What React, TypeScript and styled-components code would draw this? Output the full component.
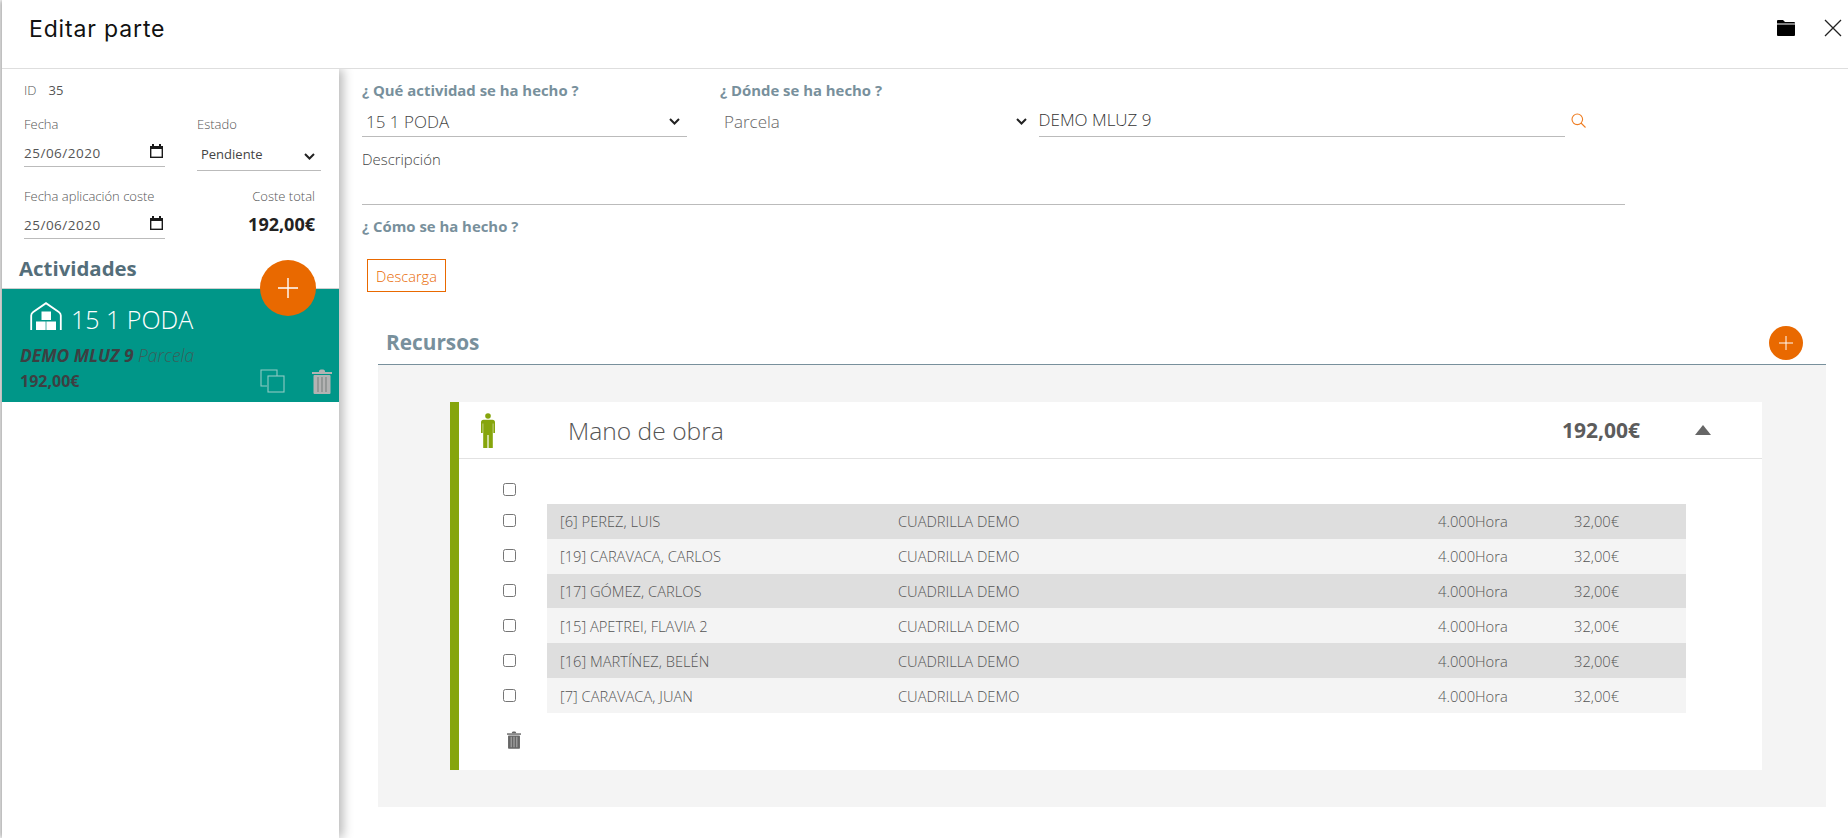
import React from "react";
import styled, { createGlobalStyle } from "styled-components";

const chevron =
  "url(\"data:image/svg+xml,%3Csvg xmlns='http://www.w3.org/2000/svg' width='11' height='7' viewBox='0 0 11 7'%3E%3Cpath d='M1 1l4.5 4.5L10 1' fill='none' stroke='%23222' stroke-width='2'/%3E%3C/svg%3E\")";

const Global = createGlobalStyle`
  html, body { margin: 0; padding: 0; background: #fff; height: 100%; overflow: hidden; }
  body { font-family: "Open Sans", "Liberation Sans", sans-serif; }
  #root { height: 100%; }
`;

const Shell = styled.div`
  margin-left: 2px;
  height: 838px;
  background: #fff;
  box-shadow: -2px 0 5px rgba(0, 0, 0, 0.35);
  display: flex;
  flex-direction: column;
`;
const Header = styled.header`
  height: 68px;
  flex: none;
  border-bottom: 1px solid #dedede;
  display: flex;
  align-items: center;
  padding: 0 6px 0 27px;
`;
const Title = styled.h1`
  flex: 1;
  margin: 0 0 10px;
  font-family: Inter, "Open Sans", sans-serif;
  font-size: 23px;
  font-weight: 400;
  letter-spacing: 0.85px;
  color: #111;
`;
const HeaderIcons = styled.div`
  display: flex;
  align-items: center;
  gap: 29px;
  margin-bottom: 12px;
  svg { display: block; }
`;
const Body = styled.div`
  flex: 1;
  display: flex;
  min-height: 0;
`;
const Side = styled.aside`
  position: relative;
  width: 337px;
  flex: none;
  box-shadow: 4px 0 10px rgba(0, 0, 0, 0.28);
  clip-path: inset(0 -20px 0 0);
  display: flex;
  flex-direction: column;
`;
const SideForm = styled.div`
  padding: 11px 22px 0 22px;
  color: #555;
  font-size: 13px;
  font-weight: 300;
`;
const IdRow = styled.div`
  display: flex;
  gap: 12px;
  height: 20px;
  align-items: center;
`;
const IdValue = styled.span`
  font-weight: 400;
`;
const SideGrid = styled.div`
  display: grid;
  grid-template-columns: 141px 124px;
  column-gap: 32px;
  margin-top: 14px;
`;
const SideField = styled.div<{ $right?: boolean }>`
  height: 72px;
  ${(p) => (p.$right ? "text-align: right; padding-right: 6px;" : "")}
`;
const FieldLabel = styled.div`
  height: 20px;
  line-height: 20px;
  color: #555;
  font-size: 13px;
  font-weight: 300;
  white-space: nowrap;
`;
const DateBox = styled.div`
  display: flex;
  align-items: center;
  justify-content: space-between;
  height: 31px;
  margin-top: 2px;
  padding: 0 2px 0 0;
  box-sizing: border-box;
  border-bottom: 1px solid #bbb;
  font-size: 13.5px;
  letter-spacing: 0.5px;
  color: #555;
  font-weight: 400;
`;
const DateText = styled.span`
  padding-top: 3px;
`;
const NativeSelect = styled.select<{ $size: number; $light?: boolean; $w?: string; $arrow: number }>`
  display: block;
  appearance: none;
  width: ${(p) => p.$w ?? "100%"};
  font-family: "Open Sans", sans-serif;
  font-size: ${(p) => p.$size}px;
  font-weight: ${(p) => (p.$light ? 300 : 400)};
  color: #444;
  background: #fff ${chevron} no-repeat right ${(p) => p.$arrow}px top 17px;
  border: 0;
  border-bottom: 1px solid #bbb;
  border-radius: 0;
  outline: none;
  padding-left: 4px;
`;
const EstadoSelect = styled(NativeSelect)`
  height: 35px;
  margin-top: 2px;
  padding-top: 2px;
`;
const TotalValue = styled.div`
  font-size: 18px;
  font-weight: 700;
  color: #222;
  line-height: 28px;
  margin-top: 4px;
`;
const ActHeading = styled.h2`
  margin: -4px 0 0 17px;
  height: 28px;
  line-height: 28px;
  font-size: 20.4px;
  font-weight: 700;
  color: #546e7a;
`;
const ActCard = styled.div`
  margin-top: 6px;
  height: 114px;
  box-sizing: border-box;
  background: #009688;
  border-top: 1px solid #cfcfcf;
  padding: 14px 0 0 15px;
  position: relative;
`;
const CardTitle = styled.div`
  display: flex;
  align-items: center;
  gap: 9px;
  margin: 0 0 1px 13px;
  font-size: 25px;
  font-weight: 300;
  color: #fff;
  line-height: 32px;
  svg { align-self: flex-start; margin-top: -1px; }
`;
const Place = styled.div`
  margin-top: 9px;
  margin-left: 3px;
  font-style: italic;
  font-size: 17.4px;
  line-height: 22px;
  color: #3a5f5a;
  font-weight: 300;
  white-space: nowrap;
  b { font-weight: 700; color: #3d3f42; }
`;
const CardFoot = styled.div`
  display: flex;
  align-items: center;
  justify-content: space-between;
  padding-right: 7px;
`;
const CardAmount = styled.div`
  font-size: 16px;
  font-weight: 700;
  color: #3d3f42;
  line-height: 30px;
  margin-left: 3px;
`;
const CardActions = styled.div`
  display: flex;
  align-items: center;
  gap: 27px;
`;
const Fab = styled.button<{ $size: number }>`
  width: ${(p) => p.$size}px;
  height: ${(p) => p.$size}px;
  border-radius: 50%;
  border: 0;
  padding: 0;
  background: #e96900;
  display: flex;
  align-items: center;
  justify-content: center;
  flex: none;
`;
const SideFab = styled(Fab)`
  position: absolute;
  left: 258px;
  top: 191px;
`;
const Main = styled.main`
  flex: 1;
  min-width: 0;
  padding: 11px 22px 0 23px;
`;
const TopGrid = styled.div`
  display: grid;
  grid-template-columns: 325px 1fr;
  column-gap: 33px;
`;
const Question = styled.div`
  height: 21px;
  line-height: 21px;
  font-size: 14.9px;
  font-weight: 700;
  color: #78909c;
`;
const ActivitySelect = styled(NativeSelect)`
  height: 36px;
  padding-top: 5px;
`;
const WhereRow = styled.div`
  display: flex;
  align-items: flex-start;
`;
const ParcelaSelect = styled(NativeSelect)`
  height: 35px;
  border-bottom: 0;
  color: #666;
  margin-right: 9.5px;
  padding-top: 5px;
`;
const PlaceInput = styled.div`
  width: 526px;
  height: 36px;
  line-height: 38px;
  box-sizing: border-box;
  border-bottom: 1px solid #bbb;
  font-size: 17px;
  font-weight: 300;
  color: #333;
`;
const SearchBtn = styled.span`
  margin: 12px 0 0 6px;
  svg { display: block; }
`;
const DescBlock = styled.div`
  width: 1263px;
  height: 68px;
  box-sizing: border-box;
  padding-top: 12px;
  border-bottom: 1px solid #bbb;
  font-size: 14.9px;
  font-weight: 300;
  color: #444;
  line-height: 20px;
`;
const HowLabel = styled(Question)`
  margin-top: 11px;
`;
const OutlineBtn = styled.button`
  display: block;
  margin: 22px 0 0 5px;
  width: 79px;
  height: 33px;
  padding: 0;
  background: #fff;
  border: 1px solid #e96900;
  color: #e96900;
  font-family: "Open Sans", sans-serif;
  font-size: 14.6px;
  font-weight: 300;
`;
const ResourceHead = styled.div`
  margin: 34px 0 0 16px;
  height: 39px;
  box-sizing: border-box;
  border-bottom: 1px solid #78909c;
  display: flex;
  justify-content: space-between;
  padding: 0 23px 0 8px;
`;
const ResourceTitle = styled.h2`
  margin: 0;
  font-size: 20.8px;
  font-weight: 700;
  line-height: 32px;
  color: #78909c;
`;
const Panel = styled.section`
  margin-left: 16px;
  height: 442px;
  box-sizing: border-box;
  background: #f4f4f4;
  padding: 37px 64px 37px 72px;
`;
const ResourceCard = styled.article`
  height: 368px;
  background: #fff;
  border-left: 9px solid #86a50c;
  box-sizing: border-box;
  display: flex;
  flex-direction: column;
`;
const ResCardHead = styled.div`
  height: 57px;
  flex: none;
  box-sizing: border-box;
  border-bottom: 1px solid #e2e2e2;
  display: flex;
  align-items: center;
  padding-left: 22px;
`;
const ResName = styled.div`
  margin-left: 73px;
  flex: 1;
  font-size: 24.6px;
  font-weight: 300;
  color: #555;
`;
const ResAmount = styled.div`
  font-size: 21px;
  font-weight: 700;
  color: #5c5c5c;
  margin-right: 55px;
`;
const Triangle = styled.span`
  width: 0;
  height: 0;
  border-left: 8px solid transparent;
  border-right: 8px solid transparent;
  border-bottom: 10px solid #666;
  margin-right: 51px;
`;
const ResBody = styled.div`
  padding: 24px 0 0 44px;
`;
const AllCheck = styled.div`
  height: 21px;
`;
const Check = styled.input.attrs({ type: "checkbox" })`
  display: block;
  width: 13px;
  height: 13px;
  margin: 0;
`;
const ResRow = styled.div`
  display: flex;
  align-items: center;
  height: 34.83px;
`;
const RowCheck = styled.div`
  width: 44px;
  flex: none;
  margin-top: -1px;
`;
const RowData = styled.div<{ $dark: boolean }>`
  width: 1139px;
  height: 100%;
  display: grid;
  grid-template-columns: 338px 540px 136px 1fr;
  align-items: center;
  padding-left: 13px;
  box-sizing: border-box;
  background: ${(p) => (p.$dark ? "#dedede" : "#f4f4f4")};
  font-size: 14.7px;
  font-weight: 300;
  color: #555;
  white-space: nowrap;
`;
const RowTrash = styled.div`
  margin: 18px 0 0 4px;
  svg { display: block; }
`;

const Plus = ({ size }: { size: number }) => (
  <svg width={size} height={size} viewBox="0 0 20 20">
    <path d="M10 0v20M0 10h20" stroke="#fff" strokeWidth="1.4" fill="none" />
  </svg>
);

const Trash = ({ w, h, body, bars }: { w: number; h: number; body: string; bars: string }) => (
  <svg width={w} height={h} viewBox="0 0 20 25">
    <path d="M7 2.2C7 1 8 .5 10 .5s3 .5 3 1.7V3H7z" fill={body} />
    <rect x="0" y="3" width="20" height="2" fill={body} />
    <rect x="1.5" y="6" width="17" height="19" rx="1" fill={body} />
    <path d="M6 8v15M10 8v15M14 8v15" stroke={bars} strokeWidth="1.6" />
  </svg>
);

const Calendar = () => (
  <svg width="13" height="14" viewBox="0 0 13 14">
    <path d="M2 0h2v2h5V0h2v2h2v12H0V2h2z" fill="#1a1a1a" />
    <rect x="1.4" y="5" width="10.2" height="7.6" fill="#fff" />
  </svg>
);

const Warehouse = () => (
  <svg width="32" height="28" viewBox="0 0 32 28" fill="none">
    <path d="M1.2 28V13.5c0-1.6.7-2.6 2-3.5L16 1.2 28.8 10c1.3.9 2 1.9 2 3.5V28" stroke="#fff" strokeWidth="1.8" />
    <rect x="11.5" y="9.5" width="9.5" height="8.5" fill="#fff" />
    <rect x="6" y="19.5" width="9" height="8.5" fill="#fff" />
    <rect x="15" y="19.5" width="1.6" height="8.5" fill="#a5d8d3" />
    <rect x="16.6" y="19.5" width="9.4" height="8.5" fill="#fff" />
  </svg>
);

const Copy = () => (
  <svg width="25" height="24" viewBox="0 0 25 24" fill="none" stroke="#8fcbc4" strokeWidth="1.1">
    <path d="M7 17H1V1h16v6" />
    <rect x="8" y="7" width="16" height="16" />
  </svg>
);

const Person = () => (
  <svg width="14" height="35" viewBox="0 0 14 35" fill="#86a50c">
    <circle cx="7" cy="3" r="2.8" />
    <path d="M2.6 6.8h8.8A2.6 2.6 0 0 1 14 9.4V20h-1.7v-9.5h-.5V35H7.6V22h-1.2v13H2.2V10.5h-.5V20H0V9.4a2.6 2.6 0 0 1 2.6-2.6z" />
  </svg>
);

const people = [
  "[6] PEREZ, LUIS",
  "[19] CARAVACA, CARLOS",
  "[17] GÓMEZ, CARLOS",
  "[15] APETREI, FLAVIA 2",
  "[16] MARTÍNEZ, BELÉN",
  "[7] CARAVACA, JUAN",
];

export default function App() {
  return (
    <Shell>
      <Global />
      <Header>
        <Title>Editar parte</Title>
        <HeaderIcons>
          <svg width="18" height="16" viewBox="0 0 18 16">
            <path d="M0 1a1 1 0 0 1 1-1h5l2 2h9a1 1 0 0 1 1 1v.6H0z" fill="#000" />
            <path d="M0 4.6h18V15a1 1 0 0 1-1 1H1a1 1 0 0 1-1-1z" fill="#000" />
          </svg>
          <svg width="18" height="18" viewBox="0 0 18 18">
            <path d="M1 1l16 16M17 1L1 17" stroke="#222" strokeWidth="1.3" fill="none" />
          </svg>
        </HeaderIcons>
      </Header>
      <Body>
        <Side>
          <SideForm>
            <IdRow>
              <span>ID</span>
              <IdValue>35</IdValue>
            </IdRow>
            <SideGrid>
              <SideField>
                <FieldLabel>Fecha</FieldLabel>
                <DateBox>
                  <DateText>25/06/2020</DateText>
                  <Calendar />
                </DateBox>
              </SideField>
              <SideField>
                <FieldLabel>Estado</FieldLabel>
                <EstadoSelect $size={13} $arrow={6} defaultValue="Pendiente">
                  <option>Pendiente</option>
                </EstadoSelect>
              </SideField>
              <SideField>
                <FieldLabel>Fecha aplicación coste</FieldLabel>
                <DateBox>
                  <DateText>25/06/2020</DateText>
                  <Calendar />
                </DateBox>
              </SideField>
              <SideField $right>
                <FieldLabel>Coste total</FieldLabel>
                <TotalValue>192,00€</TotalValue>
              </SideField>
            </SideGrid>
          </SideForm>
          <ActHeading>Actividades</ActHeading>
          <ActCard>
            <CardTitle>
              <Warehouse />
              15 1 PODA
            </CardTitle>
            <Place>
              <b>DEMO MLUZ 9</b> Parcela
            </Place>
            <CardFoot>
              <CardAmount>192,00€</CardAmount>
              <CardActions>
                <Copy />
                <Trash w={20} h={25} body="#b3b3b3" bars="#8d9190" />
              </CardActions>
            </CardFoot>
          </ActCard>
          <SideFab $size={56}>
            <Plus size={20} />
          </SideFab>
        </Side>
        <Main>
          <TopGrid>
            <div>
              <Question>¿ Qué actividad se ha hecho ?</Question>
              <ActivitySelect $size={17} $light $arrow={7} defaultValue="15 1 PODA">
                <option>15 1 PODA</option>
              </ActivitySelect>
            </div>
            <div>
              <Question>¿ Dónde se ha hecho ?</Question>
              <WhereRow>
                <ParcelaSelect $size={17} $light $w="309px" $arrow={2} defaultValue="Parcela">
                  <option>Parcela</option>
                </ParcelaSelect>
                <PlaceInput>DEMO MLUZ 9</PlaceInput>
                <SearchBtn>
                  <svg width="15" height="15" viewBox="0 0 15 15" fill="none" stroke="#ef7d22" strokeWidth="1.1">
                    <circle cx="6.3" cy="6.3" r="5.3" />
                    <path d="M10 10l4.5 4.5" />
                  </svg>
                </SearchBtn>
              </WhereRow>
            </div>
          </TopGrid>
          <DescBlock>Descripción</DescBlock>
          <HowLabel>¿ Cómo se ha hecho ?</HowLabel>
          <OutlineBtn>Descarga</OutlineBtn>
          <ResourceHead>
            <ResourceTitle>Recursos</ResourceTitle>
            <Fab $size={34}>
              <Plus size={14} />
            </Fab>
          </ResourceHead>
          <Panel>
            <ResourceCard>
              <ResCardHead>
                <Person />
                <ResName>Mano de obra</ResName>
                <ResAmount>192,00€</ResAmount>
                <Triangle />
              </ResCardHead>
              <ResBody>
                <AllCheck>
                  <Check />
                </AllCheck>
                {people.map((name, i) => (
                  <ResRow key={name}>
                    <RowCheck>
                      <Check />
                    </RowCheck>
                    <RowData $dark={i % 2 === 0}>
                      <span>{name}</span>
                      <span>CUADRILLA DEMO</span>
                      <span>4.000Hora</span>
                      <span>32,00€</span>
                    </RowData>
                  </ResRow>
                ))}
                <RowTrash>
                  <Trash w={14} h={18} body="#666" bars="#aaa" />
                </RowTrash>
              </ResBody>
            </ResourceCard>
          </Panel>
        </Main>
      </Body>
    </Shell>
  );
}
